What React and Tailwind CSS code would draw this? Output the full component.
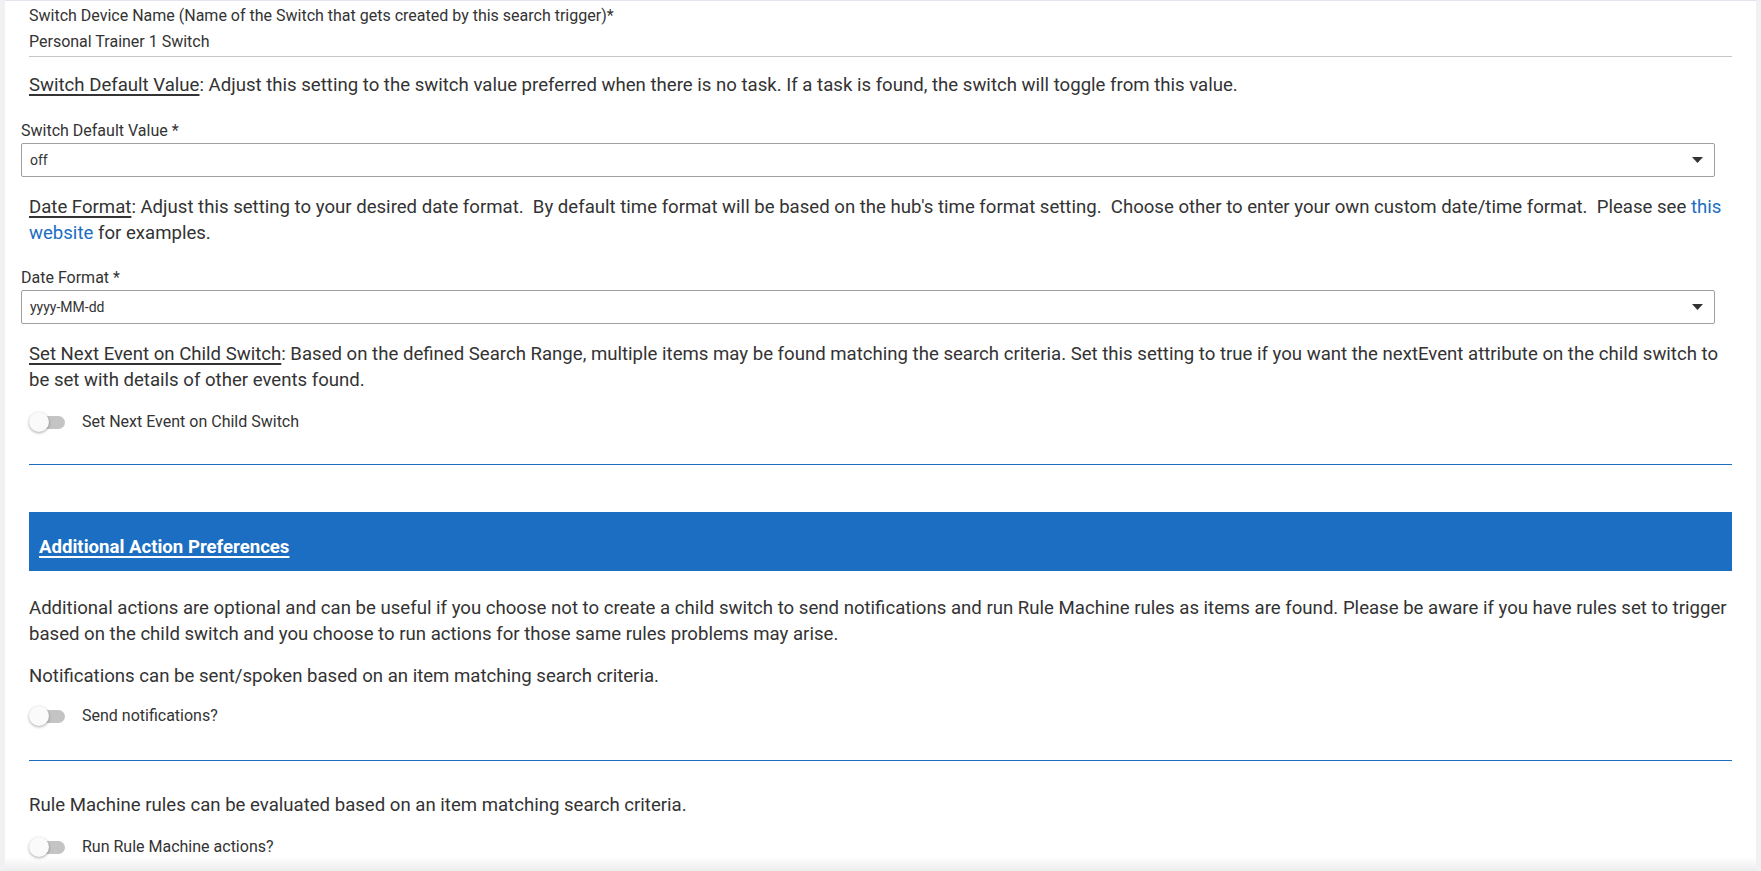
function Toggle({ label, className = '' }) {
  return (
    <div className={`flex h-6 items-center pl-2 ${className}`}>
      <div className="relative h-5 w-9">
        <div className="absolute left-[10px] top-[4px] h-[13px] w-[26px] rounded-full bg-[#c4c4c4]" />
        <div className="absolute left-0 top-0 h-5 w-5 rounded-full bg-[#fafafa] shadow-[0_1px_3px_rgba(0,0,0,0.35)]" />
      </div>
      <span className="ml-[17px] text-[16px] leading-5 text-[#333]">{label}</span>
    </div>
  )
}

function Select({ value, className = '' }) {
  return (
    <div className={`mr-[17px] flex h-[34px] items-center justify-between rounded-[2px] border border-[#a0a0a0] bg-white pl-2 pr-[10px] ${className}`}>
      <span className="text-[14px] text-[#333]">{value}</span>
      <svg width="11" height="6" viewBox="0 0 11 6" className="mr-[1px]">
        <path d="M0 0 L11 0 L5.5 6 Z" fill="#333" />
      </svg>
    </div>
  )
}

function Heading({ children }) {
  return <span className="underline decoration-[1.5px] underline-offset-[3px]">{children}</span>
}

export default function App() {
  return (
    <div
      className="relative h-[871px] w-full overflow-hidden bg-[#f1f1f3]"
      style={{ fontFamily: 'Roboto, "Noto Sans", sans-serif' }}
    >
      <div className="mx-[5px] h-full border-t border-[#e4e4ee] bg-white pl-[16px] pr-[24px] text-[#333]">
        <div className="pl-2 pt-[5px] text-[16px] leading-5">
          Switch Device Name (Name of the Switch that gets created by this search trigger)*
        </div>
        <div className="mt-[6px] pl-2 text-[16px] leading-5">Personal Trainer 1 Switch</div>
        <div className="ml-2 mt-[4px] border-t border-[#c6c6c6]" />

        <p className="mt-[15px] pl-2 text-[18.6px] leading-[26px]">
          <Heading>Switch Default Value</Heading>: Adjust this setting to the switch value preferred when there is no task. If a task is found, the switch will toggle from this value.
        </p>

        <div className="mt-[23px] text-[16px] leading-5">Switch Default Value *</div>
        <Select value="off" className="mt-[2px]" />

        <p className="mt-[17px] pl-2 text-[18.6px] leading-[26px]">
          <Heading>Date Format</Heading>: Adjust this setting to your desired date format.&nbsp; By default time format will be based on the hub's time format setting.&nbsp; Choose other to enter your own custom date/time format.&nbsp; Please see{' '}
          <a className="text-[#1b6ec2]">this website</a> for examples.
        </p>

        <div className="mt-[22px] text-[16px] leading-5">Date Format *</div>
        <Select value="yyyy-MM-dd" className="mt-[2px]" />

        <p className="mt-[17px] pl-2 text-[18.6px] leading-[26px]">
          <Heading>Set Next Event on Child Switch</Heading>: Based on the defined Search Range, multiple items may be found matching the search criteria. Set this setting to true if you want the nextEvent attribute on the child switch to be set with details of other events found.
        </p>

        <Toggle label="Set Next Event on Child Switch" className="mt-[17px]" />

        <div className="ml-2 mt-[30px] border-t border-[#1b6ec2]" />

        <div className="ml-2 mt-[47px] h-[59px] bg-[#1b6ec2] pl-[10px] pt-[23px]">
          <span className="text-[18.6px] font-bold leading-6 text-white underline decoration-[1.5px] underline-offset-[3px]">
            Additional Action Preferences
          </span>
        </div>

        <p className="mt-[24px] pl-2 text-[18.6px] leading-[26px]">
          Additional actions are optional and can be useful if you choose not to create a child switch to send notifications and run Rule Machine rules as items are found. Please be aware if you have rules set to trigger based on the child switch and you choose to run actions for those same rules problems may arise.
        </p>

        <p className="mt-[16px] pl-2 text-[18.6px] leading-[26px]">
          Notifications can be sent/spoken based on an item matching search criteria.
        </p>
        <Toggle label="Send notifications?" className="mt-[15px]" />

        <div className="ml-2 mt-[32px] border-t border-[#1b6ec2]" />

        <p className="mt-[31px] pl-2 text-[18.6px] leading-[26px]">
          Rule Machine rules can be evaluated based on an item matching search criteria.
        </p>
        <Toggle label="Run Rule Machine actions?" className="mt-[17px]" />
      </div>

      {/* bottom fade */}
      <div className="pointer-events-none absolute bottom-0 left-[5px] right-[5px] h-[14px] bg-gradient-to-b from-transparent to-[#ececec]" />
    </div>
  )
}
